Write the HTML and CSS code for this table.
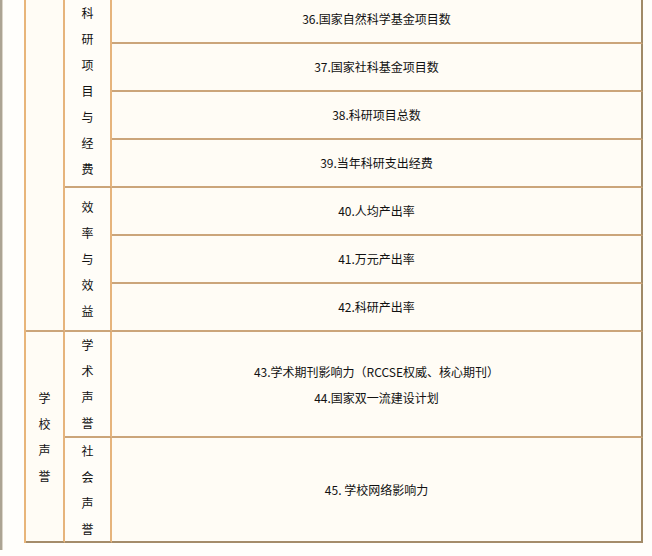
FILE: index.html
```html
<!DOCTYPE html>
<html lang="zh">
<head>
<meta charset="utf-8">
<link rel="stylesheet" href="styles.css">
</head>
<body>
<div class="page">
  <div class="grid">
    <div class="cell c1 r-top"></div>
    <div class="cell c2 r-keyan"><span class="vert">科研项目与经费</span></div>
    <div class="cell c3">36.国家自然科学基金项目数</div>
    <div class="cell c3">37.国家社科基金项目数</div>
    <div class="cell c3">38.科研项目总数</div>
    <div class="cell c3">39.当年科研支出经费</div>
    <div class="cell c2 r-xiaolv"><span class="vert">效率与效益</span></div>
    <div class="cell c3">40.人均产出率</div>
    <div class="cell c3">41.万元产出率</div>
    <div class="cell c3">42.科研产出率</div>
    <div class="cell c1 r-school last-row"><span class="vert">学校声誉</span></div>
    <div class="cell c2"><span class="vert">学术声誉</span></div>
    <div class="cell c3 multi">
      <div>43.学术期刊影响力（RCCSE权威、核心期刊）</div>
      <div>44.国家双一流建设计划</div>
    </div>
    <div class="cell c2 last-row"><span class="vert">社会声誉</span></div>
    <div class="cell c3 last-row">45. 学校网络影响力</div>
  </div>
</div>
</body>
</html>
```

FILE: styles.css
```css
html, body {
  margin: 0;
  padding: 0;
  background: #fffefb;
}
body {
  width: 652px;
  height: 556px;
  overflow: hidden;
  font-family: "Noto Sans CJK SC", "Liberation Sans", sans-serif;
  font-size: 12px;
  color: #111;
}
.page {
  height: 556px;
  border-left: 2px solid #aca493;
  box-shadow: inset 1px 0 0 #dcd6ca;
  padding-left: 22px;
  box-sizing: border-box;
}
.grid {
  margin-top: -6px;
  width: 619px;
  display: grid;
  grid-template-columns: 39px 47px 531px;
  grid-template-rows: repeat(7, 48px) 106px 105px;
  border-left: 2px solid #e8b57a;
  border-top: 2px solid #cda77b;
  box-sizing: content-box;
}
.cell {
  background: #fffcf5;
  border-right: 2px solid #e6b47c;
  border-bottom: 2px solid #cba57a;
  display: flex;
  align-items: center;
  justify-content: center;
  text-align: center;
  line-height: 26px;
}
.c1 { grid-column: 1; }
.c2 { grid-column: 2; background: #fffdf8; }
.c3 {
  grid-column: 3;
  border-right-color: #a08a68;
}
.r-top { grid-row: 1 / span 7; }
.r-keyan { grid-row: 1 / span 4; }
.r-xiaolv { grid-row: 5 / span 3; }
.r-school { grid-row: 8 / span 2; }
.last-row { border-bottom-color: #a48c6a; }
.multi {
  flex-direction: column;
  padding-top: 2px;
}
.vert {
  display: block;
  width: 12px;
  word-break: break-all;
  line-height: 26px;
}
```
